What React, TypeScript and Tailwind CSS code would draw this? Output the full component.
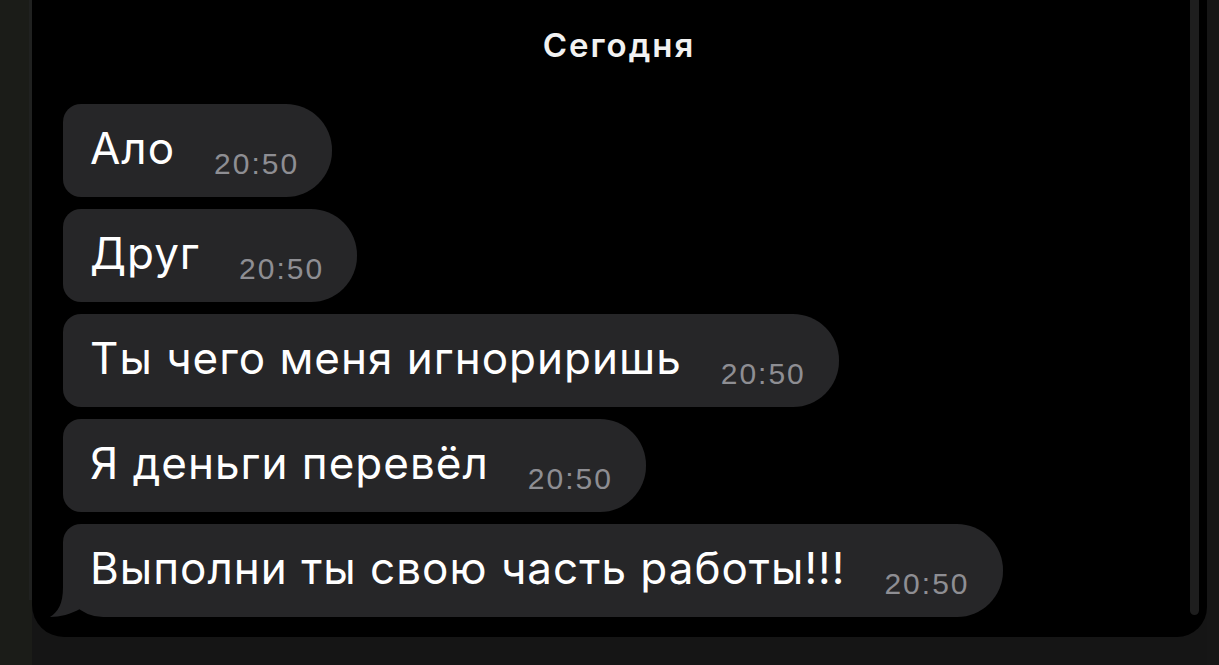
import React from "react";

const messages = [
  "Ало",
  "Друг",
  "Ты чего меня игнориришь",
  "Я деньги перевёл",
  "Выполни ты свою часть работы!!!",
];

function Bubble({ text, last }: { text: string; last: boolean }) {
  return (
    <div
      className={
        "relative flex items-baseline h-[93px] pt-[22px] pl-[27px] pr-[33px] bg-[#262628] rounded-tl-[18px] rounded-tr-[46px] rounded-br-[46px] " +
        (last ? "rounded-bl-[40px]" : "rounded-bl-[18px]")
      }
    >
      <span className="text-[44px] leading-[44px] text-white tracking-[1px]">{text}</span>
      <span
        className="ml-[39px] text-[30px] leading-[30px] text-[#8e8e93] tracking-[2px] translate-y-[10px]"
        style={{ fontFamily: '"Liberation Sans", Arial, sans-serif' }}
      >
        20:50
      </span>
      {last && (
        <svg
          className="absolute left-[-13px] bottom-0"
          width="40"
          height="40"
          viewBox="0 0 40 40"
        >
          <path
            d="M13 0 L13 10 C13 27 8 35 0 40 C10 40 21 37 30 32 L30 0 Z"
            fill="#262628"
          />
        </svg>
      )}
    </div>
  );
}

export default function App() {
  return (
    <div
      className="w-[1219px] h-[665px] bg-[#151515] flex overflow-hidden"
      style={{ fontFamily: 'Inter, "Liberation Sans", Arial, sans-serif' }}
    >
      <div className="w-[32px] h-full bg-[#1b1c18] flex justify-end">
        <div className="w-[3px] h-[600px] bg-[#202120]" />
      </div>
      <div className="w-[1175px] h-[637px] bg-black rounded-bl-[32px] rounded-br-[30px] flex">
        <div className="flex-1 flex flex-col">
          <div className="h-[104px] flex justify-center pt-[26px] pl-[16px]">
            <span className="text-[33px] leading-[38px] font-semibold text-[#f2f2f2] tracking-[2px]">
              Сегодня
            </span>
          </div>
          <div className="flex flex-col items-start gap-[12px] pl-[31px]">
            {messages.map((m, i) => (
              <Bubble key={i} text={m} last={i === messages.length - 1} />
            ))}
          </div>
        </div>
        <div className="w-[9px] h-[615px] bg-[#1e1e1e] rounded-b-[10px]" />
        <div className="w-[8px]" />
      </div>
      <div className="flex-1 h-full bg-[#161616]" />
    </div>
  );
}
